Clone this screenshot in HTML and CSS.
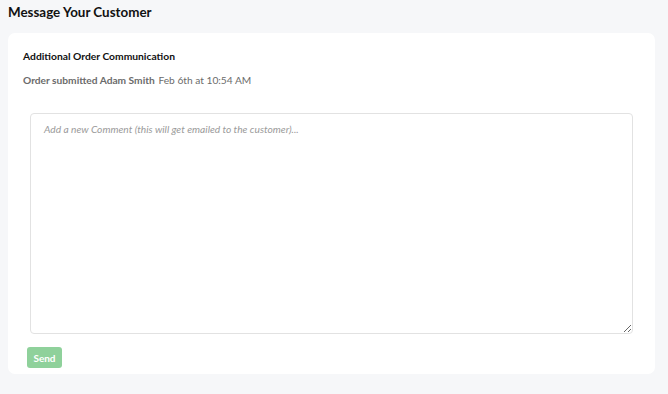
FILE: index.html
```html
<!DOCTYPE html>
<html lang="en">
<head>
  <meta charset="UTF-8">
  <title>Message Your Customer</title>
  <link rel="stylesheet" href="styles.css">
</head>
<body>

  <h2 class="page-title">Message Your Customer</h2>

  <div class="card">
    <h3 class="card-title">Additional Order Communication</h3>
    <p class="order-meta">
      <strong>Order submitted Adam Smith</strong>
      <span class="order-date">Feb 6th at 10:54 AM</span>
    </p>

    <div class="comment-box">
      <textarea class="comment" placeholder="Add a new Comment (this will get emailed to the customer)..."></textarea>
    </div>

    <button class="send-btn" disabled>Send</button>
  </div>

</body>
</html>
```

FILE: styles.css
```css
html, body {
  height: 100%;
}

body {
  margin: 0;
  padding: 0 13px 0 8px;
  background: #f6f7f9;
  font-family: Lato, 'Open Sans', sans-serif;
  color: #111;
  box-sizing: border-box;
}

.page-title {
  margin: 0;
  padding: 4px 0 0;
  height: 29px;
  font-size: 13.4px;
  font-weight: 700;
  line-height: 16px;
  color: #111;
}

.card {
  background: #fff;
  border-radius: 7px;
  padding: 16px 15px 7px;
  height: 341px;
  box-sizing: border-box;
}

.card-title {
  margin: 0;
  font-size: 10.3px;
  font-weight: 700;
  line-height: 14px;
  color: #111;
}

.order-meta {
  margin: 10px 0 0;
  font-size: 10.2px;
  line-height: 14px;
  color: #6b6b6b;
}

.order-meta strong {
  font-weight: 700;
  margin-right: 1px;
}

.comment-box {
  margin: 26px 7px 0;
}

.comment {
  display: block;
  width: 100%;
  height: 221px;
  box-sizing: border-box;
  border: 1px solid #e2e2e2;
  border-radius: 4px;
  padding: 9px 13px;
  font-family: Lato, 'Open Sans', sans-serif;
  font-size: 10.2px;
  resize: vertical;
}

.comment::placeholder {
  font-style: italic;
  color: #9a9a9a;
}

.send-btn {
  margin: 13px 0 0 4px;
  width: 35px;
  height: 21px;
  padding: 0;
  border: none;
  border-radius: 3px;
  background: #8fd19b;
  color: #fff;
  font-family: Lato, 'Open Sans', sans-serif;
  font-size: 10px;
  font-weight: 700;
}
```
